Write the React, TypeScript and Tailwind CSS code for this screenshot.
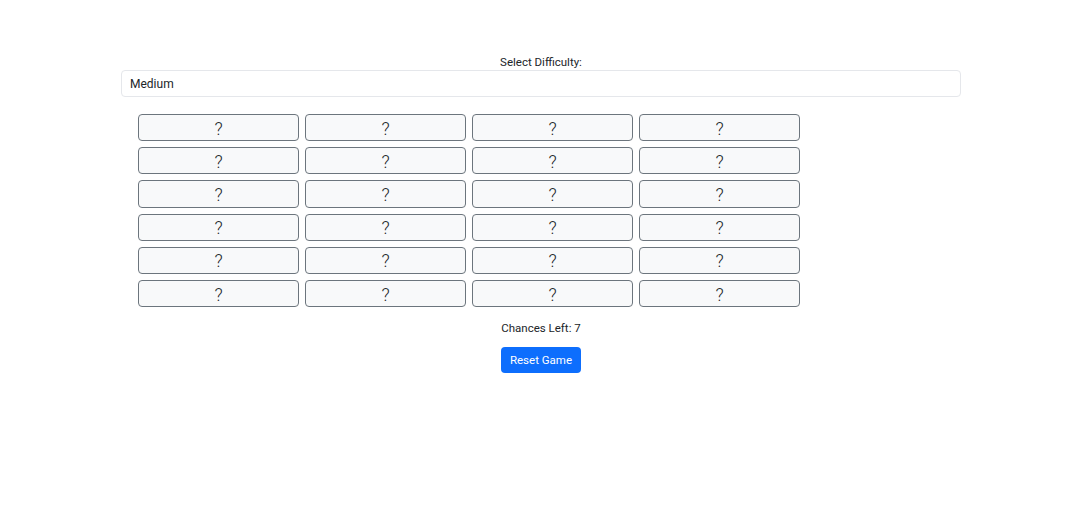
import { useState } from "react"

const ROWS = 6
const COLS = 4

export default function App() {
  const [level, setLevel] = useState("Medium")
  const [chances, setChances] = useState(7)
  const cards = Array.from({ length: ROWS * COLS }, (_, i) => i)

  return (
    <div className="min-h-screen bg-white text-[#212529] font-['Roboto',sans-serif] pl-[2px]">
      <div className="w-[840px] mx-auto pt-[55px] flex flex-col items-center">
        <label htmlFor="difficulty" className="text-[11.5px] leading-[15px]">Select Difficulty:</label>
        <select
          id="difficulty"
          value={level}
          onChange={(e) => setLevel(e.target.value)}
          className="w-full h-[27px] px-[8px] text-[12px] border border-[#e5e7eb] rounded-[4px] bg-white appearance-none outline-none"
        >
          <option>Easy</option>
          <option>Medium</option>
          <option>Hard</option>
        </select>

        {/* board */}
        <div className="self-start ml-[17px] mt-[17px] grid grid-cols-[repeat(4,161px)] gap-x-[6px] gap-y-[6px]">
          {cards.map((c) => (
            <button
              key={c}
              onClick={() => setChances((n) => Math.max(0, n))}
              className="h-[27.2px] pt-[2px] border border-[#6c757d] rounded-[4px] bg-[#f8f9fa] text-[18px] font-light leading-none text-[#212529] flex items-center justify-center"
            >
              ?
            </button>
          ))}
        </div>

        <p className="mt-[14px] text-[11.5px] leading-[15px]">Chances Left: {chances}</p>
        <button
          onClick={() => setChances(7)}
          className="mt-[11px] h-[26px] px-[9px] bg-[#0d6efd] text-white text-[11.5px] rounded-[4px]"
        >
          Reset Game
        </button>
      </div>
    </div>
  )
}
